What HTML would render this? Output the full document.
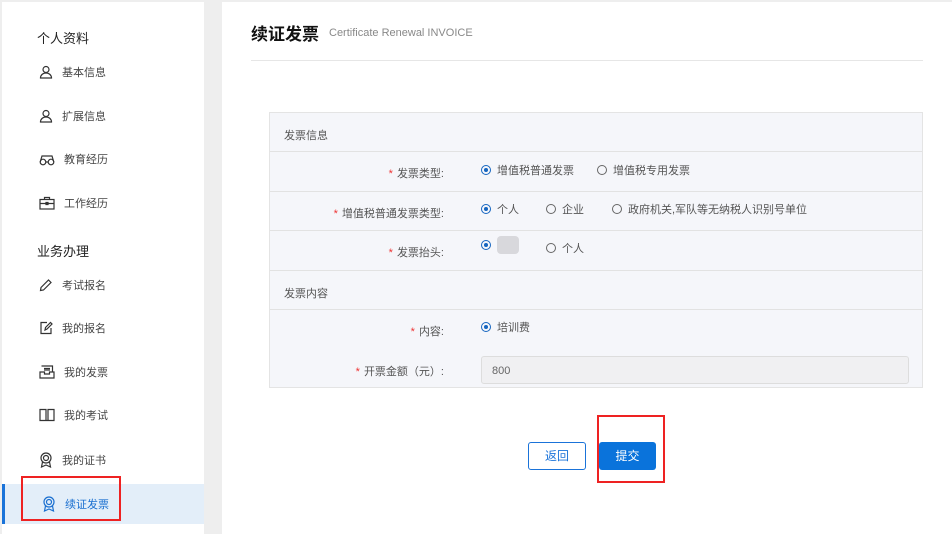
<!DOCTYPE html>
<html><head><meta charset="utf-8"><style>
*{margin:0;padding:0;box-sizing:border-box}
body{width:952px;height:534px;background:#eeeeee;font-family:"Liberation Sans","Noto Sans CJK SC",sans-serif;position:relative;overflow:hidden;color:#333}
.side{position:absolute;left:2px;top:2px;width:202px;height:532px;background:#fff}
.grp{position:absolute;left:37px;font-size:13px;color:#222}
.it{position:absolute;left:2px;width:202px;height:40px;font-size:11px;color:#444;display:flex;align-items:center;padding-left:37px}
.it svg{margin-right:9px}
.main{position:absolute;left:222px;top:2px;width:730px;height:532px;background:#fff}
.form{position:absolute;left:269px;top:112px;width:654px;height:276px;background:#f5f6fa;border:1px solid #e4e4e4;font-size:11px;color:#555}
.row{position:absolute;left:0;width:652px;border-bottom:1px solid #e2e2e2}
.lab{position:absolute;right:478px;text-align:right;white-space:nowrap}
.lab b{color:#e33;font-weight:normal;margin-right:4px}
.rd{position:absolute;display:flex;align-items:center;white-space:nowrap}
.rd i{display:inline-block;width:10px;height:10px;border:1px solid #666;border-radius:50%;margin-right:6px;position:relative}
.rd i.on{border-color:#1565c0}
.rd i.on:after{content:"";position:absolute;left:2px;top:2px;width:4px;height:4px;border-radius:50%;background:#1565c0}
</style></head><body>
<div class="side"></div>
<div class="grp" style="top:28px">个人资料</div>
<div class="it" style="top:52px"><svg width="14" height="14" viewBox="0 0 14 14" fill="none" stroke="#333" stroke-width="1.2"><circle cx="7" cy="4.5" r="3"/><path d="M1.5 13c0-3 2.5-5 5.5-5s5.5 2 5.5 5z"/></svg>基本信息</div>
<div class="it" style="top:96px"><svg width="14" height="14" viewBox="0 0 14 14" fill="none" stroke="#333" stroke-width="1.2"><circle cx="7" cy="4.5" r="3"/><path d="M1.5 13c0-3 2.5-5 5.5-5s5.5 2 5.5 5z"/></svg>扩展信息</div>
<div class="it" style="top:139px"><svg width="16" height="14" viewBox="0 0 16 14" fill="none" stroke="#333" stroke-width="1.2"><circle cx="4" cy="10" r="2.8"/><circle cx="12" cy="10" r="2.8"/><path d="M1.2 10 3 4h10l1.8 6M6.8 10h2.4"/></svg>教育经历</div>
<div class="it" style="top:183px"><svg width="16" height="14" viewBox="0 0 16 14" fill="none" stroke="#333" stroke-width="1.2"><rect x="1" y="3.5" width="14" height="9.5"/><path d="M5.5 3.5V1.5h5v2M1 7.5h14M7 6.5h2v2H7z"/></svg>工作经历</div>
<div class="grp" style="top:241px">业务办理</div>
<div class="it" style="top:265px"><svg width="14" height="14" viewBox="0 0 14 14" fill="none" stroke="#333" stroke-width="1.2"><path d="M1.5 12.5 2 9.5 9.5 2l2.5 2.5L4.5 12z"/></svg>考试报名</div>
<div class="it" style="top:308px"><svg width="14" height="14" viewBox="0 0 14 14" fill="none" stroke="#333" stroke-width="1.2"><path d="M8 1.5H2v11h10V7M6 9l.5-2.5L11.5 1.5l1.5 1.5-5 5z"/></svg>我的报名</div>
<div class="it" style="top:352px"><svg width="16" height="14" viewBox="0 0 16 14" fill="none" stroke="#333" stroke-width="1.2"><path d="M2.5 1h11v6M1 7h4.5v2h5V7H15v6H1zM5 3.5h6M5 5h6"/></svg>我的发票</div>
<div class="it" style="top:395px"><svg width="16" height="14" viewBox="0 0 16 14" fill="none" stroke="#333" stroke-width="1.2"><path d="M1 1.5h6v11H1zM9 1.5h6v11H9zM7 12.5h2"/></svg>我的考试</div>
<div class="it" style="top:440px"><svg width="14" height="16" viewBox="0 0 14 16" fill="none" stroke="#333" stroke-width="1.2"><circle cx="7" cy="6" r="5"/><circle cx="7" cy="6" r="2.5"/><path d="M3.5 10 2.5 15 7 13l4.5 2-1-5"/></svg>我的证书</div>
<div style="position:absolute;left:2px;top:484px;width:202px;height:40px;background:#e3eef9;border-left:3px solid #1a73d9"></div>
<div class="it" style="top:484px;color:#1a6fd0;padding-left:40px"><svg width="14" height="16" viewBox="0 0 14 16" fill="none" stroke="#1a6fd0" stroke-width="1.2"><circle cx="7" cy="6" r="5"/><circle cx="7" cy="6" r="2.5"/><path d="M3.5 10 2.5 15 7 13l4.5 2-1-5"/></svg>续证发票</div>
<div style="position:absolute;left:21px;top:476px;width:100px;height:45px;border:2px solid #e22"></div>

<div class="main"></div>
<div style="position:absolute;left:251px;top:20px;font-size:17px;font-weight:bold;color:#111">续证发票</div>
<div style="position:absolute;left:329px;top:27px;font-size:11px;color:#888">Certificate Renewal INVOICE</div>
<div style="position:absolute;left:251px;top:60px;width:672px;height:1px;background:#e6e6e6"></div>

<div class="form">
<div class="row" style="top:0;height:39px"><span style="position:absolute;left:14px;top:14px">发票信息</span></div>
<div class="row" style="top:39px;height:40px"><span class="lab" style="top:13px"><b>*</b>发票类型:</span>
<span class="rd" style="left:211px;top:10px"><i class="on"></i>增值税普通发票</span><span class="rd" style="left:327px;top:10px"><i></i>增值税专用发票</span></div>
<div class="row" style="top:79px;height:39px"><span class="lab" style="top:13px"><b>*</b>增值税普通发票类型:</span>
<span class="rd" style="left:211px;top:9px"><i class="on"></i>个人</span><span class="rd" style="left:276px;top:9px"><i></i>企业</span><span class="rd" style="left:342px;top:9px"><i></i>政府机关,军队等无纳税人识别号单位</span></div>
<div class="row" style="top:118px;height:40px"><span class="lab" style="top:13px"><b>*</b>发票抬头:</span>
<span class="rd" style="left:211px;top:9px"><i class="on"></i></span><span style="position:absolute;left:227px;top:5px;width:22px;height:18px;background:#d8d8dc;border-radius:4px"></span><span class="rd" style="left:276px;top:9px"><i></i>个人</span></div>
<div class="row" style="top:158px;height:39px"><span style="position:absolute;left:14px;top:14px">发票内容</span></div>
<div style="position:absolute;top:197px;height:39px;width:652px"><span class="lab" style="top:13px"><b>*</b>内容:</span><span class="rd" style="left:211px;top:9px"><i class="on"></i>培训费</span></div>
<span class="lab" style="top:250px"><b>*</b>开票金额（元）:</span>
<div style="position:absolute;left:211px;top:243px;width:428px;height:28px;border:1px solid #ddd;border-radius:3px;background:#f0f0f2;padding:8px 0 0 10px;color:#666">800</div>
</div>

<div style="position:absolute;left:528px;top:442px;width:58px;height:28px;border:1px solid #1a73d9;border-radius:3px;color:#1a73d9;font-size:12px;text-align:center;line-height:26px;background:#fff">返回</div>
<div style="position:absolute;left:599px;top:442px;width:57px;height:28px;background:#0a73db;border-radius:3px;color:#fff;font-size:12px;text-align:center;line-height:28px">提交</div>
<div style="position:absolute;left:597px;top:415px;width:68px;height:68px;border:2px solid #e22"></div>
</body></html>
